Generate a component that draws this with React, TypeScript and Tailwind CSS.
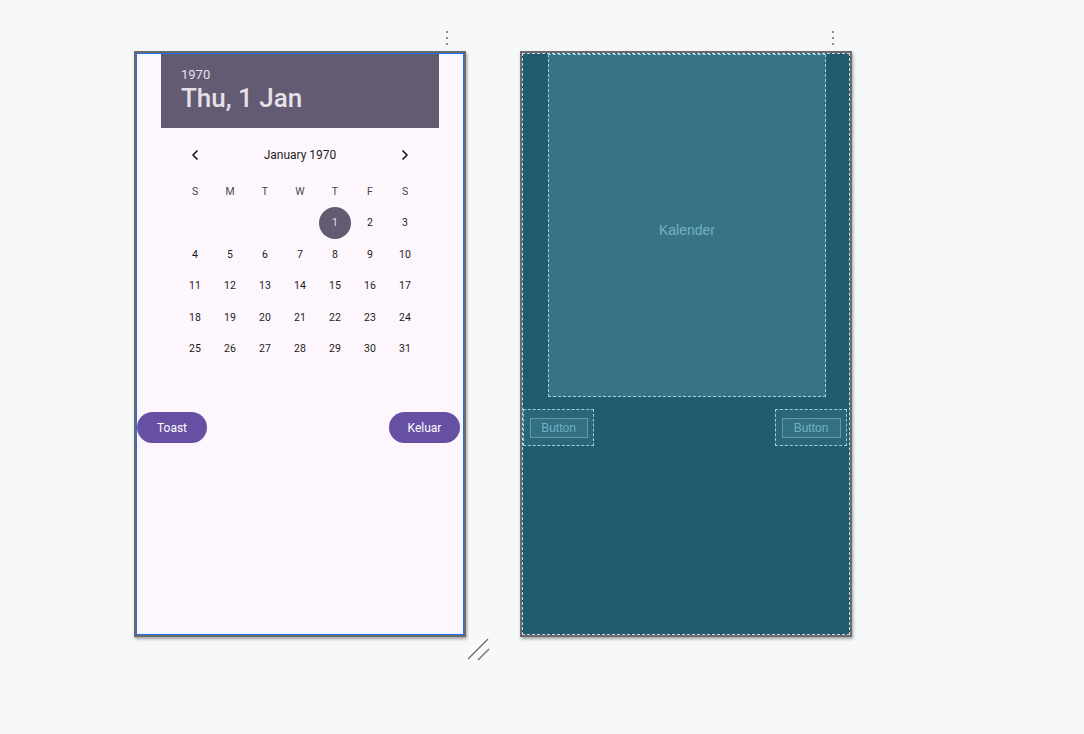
import { ChevronLeft, ChevronRight } from "lucide-react";

// Weeks of January 1970 (starts on Thursday)
const weeks: (number | null)[][] = [
  [null, null, null, null, 1, 2, 3],
  [4, 5, 6, 7, 8, 9, 10],
  [11, 12, 13, 14, 15, 16, 17],
  [18, 19, 20, 21, 22, 23, 24],
  [25, 26, 27, 28, 29, 30, 31],
];

const dayNames = ["S", "M", "T", "W", "T", "F", "S"];

// Three vertical dots above each frame
const Dots = () => (
  <div className="flex h-[26px] justify-end pr-[18px] pt-[6px]">
    <div className="flex flex-col gap-[4px]">
      <div className="h-[2px] w-[2px] rounded-full bg-[#6b6b6b]" />
      <div className="h-[2px] w-[2px] rounded-full bg-[#6b6b6b]" />
      <div className="h-[2px] w-[2px] rounded-full bg-[#6b6b6b]" />
    </div>
  </div>
);

const DesignFrame = () => (
  <div className="h-[586px] w-[332px] border-2 border-[#6a6a6a] shadow-[1px_2px_3px_rgba(0,0,0,0.35)]">
    <div className="flex h-full w-full flex-col border border-[#1a73e8] bg-[#fdf7fd] font-['Roboto']">
      {/* Calendrier */}
      <div className="mx-auto flex h-[343px] w-[278px] flex-col">
        <div className="h-[74px] bg-[#625b71] pl-5 pt-[13px] text-[#e6e0e9]">
          <div className="text-[13px] leading-[16px]">1970</div>
          <div className="text-[26px] font-medium leading-[30px]">Thu, 1 Jan</div>
        </div>

        <div className="mt-[15px] flex h-[24px] items-center justify-between px-[26px] text-[#1d1b20]">
          <ChevronLeft size={16} strokeWidth={2.6} />
          <span className="text-[12px]">January 1970</span>
          <ChevronRight size={16} strokeWidth={2.6} />
        </div>

        <div className="mt-[13px] grid h-[24px] grid-cols-7 px-[16.5px] text-[10.5px] text-[#49454f]">
          {dayNames.map((d, i) => (
            <div key={i} className="flex items-center justify-center">
              {d}
            </div>
          ))}
        </div>

        <div className="mt-[3px] flex flex-col px-[16.5px]">
          {weeks.map((week, wi) => (
            <div key={wi} className="grid h-[31.6px] grid-cols-7 text-[10.5px] text-[#1d1b20]">
              {week.map((day, di) => (
                <div key={di} className="flex items-center justify-center">
                  {day === 1 ? (
                    <div className="flex h-[32px] w-[32px] items-center justify-center rounded-full bg-[#625b71] text-[#e6e0e9]">
                      1
                    </div>
                  ) : (
                    day
                  )}
                </div>
              ))}
            </div>
          ))}
        </div>
      </div>

      {/* Boutons */}
      <div className="mt-[15px] flex justify-between pr-[3px]">
        <button className="h-[31px] w-[70px] rounded-full bg-[#6750a4] text-[12px] text-white">
          Toast
        </button>
        <button className="h-[31px] w-[71px] rounded-full bg-[#6750a4] text-[12px] text-white">
          Keluar
        </button>
      </div>
    </div>
  </div>
);

const BlueprintFrame = () => (
  <div className="h-[586px] w-[332px] border-2 border-[#6a6a6a] shadow-[1px_2px_3px_rgba(0,0,0,0.35)]">
    <div className="flex h-full w-full flex-col border border-dashed border-[#c9dde3] bg-[#225b6d] font-['Liberation_Sans',sans-serif]">
      <div className="ml-[25px] flex h-[343px] w-[278px] items-center justify-center border border-dashed border-[#8fd3e6] bg-[#387284] pt-[10px] text-[14px] text-[#70b2c4]">
        Kalender
      </div>
      <div className="mt-[12px] flex justify-between pr-[2px]">
        <div className="flex h-[37px] w-[71px] items-center justify-center border border-dashed border-[#8fd3e6] bg-[#2b6577]">
          <div className="flex h-[20px] w-[58px] items-center justify-center border border-[#5c9bad] bg-[#327082] text-[12px] text-[#70b2c4]">
            Button
          </div>
        </div>
        <div className="flex h-[37px] w-[72px] items-center justify-center border border-dashed border-[#8fd3e6] bg-[#2b6577]">
          <div className="flex h-[20px] w-[59px] items-center justify-center border border-[#5c9bad] bg-[#327082] text-[12px] text-[#70b2c4]">
            Button
          </div>
        </div>
      </div>
    </div>
  </div>
);

const App = () => {
  return (
    <div className="min-h-screen w-full bg-[#f7f8fa]">
      <div className="flex gap-[54px] pl-[134px] pt-[25px]">
        <div className="relative flex w-[332px] flex-col">
          <Dots />
          <DesignFrame />
          {/* Poignée de redimensionnement */}
          <svg
            className="absolute left-[333px] top-[613px]"
            width="24"
            height="24"
            viewBox="0 0 24 24"
          >
            <line x1="1" y1="21" x2="21" y2="1" stroke="#6b6b6b" strokeWidth="1.2" />
            <line x1="11" y1="22" x2="22" y2="11" stroke="#6b6b6b" strokeWidth="1.2" />
          </svg>
        </div>
        <div className="flex w-[332px] flex-col">
          <Dots />
          <BlueprintFrame />
        </div>
      </div>
    </div>
  );
};

export default App;
